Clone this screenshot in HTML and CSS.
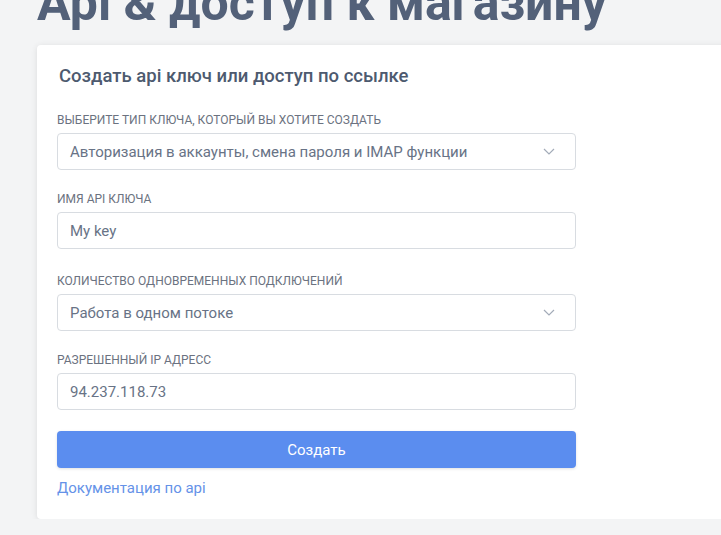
FILE: index.html
```html
<!DOCTYPE html>
<html lang="ru">
<head>
<meta charset="utf-8">
<title>Api & доступ к магазину</title>
<link rel="stylesheet" href="styles.css">
</head>
<body>
<div class="page">
  <h1 class="page-title">Api &amp; доступ к магазину</h1>
  <div class="card">
    <h2 class="card-title">Создать api ключ или доступ по ссылке</h2>
    <form class="form">
      <div class="field">
        <div class="label">Выберите тип ключа, который вы хотите создать</div>
        <div class="control select">
          <span>Авторизация в аккаунты, смена пароля и IMAP функции</span>
          <svg class="chev" width="12" height="7" viewBox="0 0 12 7"><path d="M1 1l5 5 5-5" fill="none" stroke="#a3abb8" stroke-width="1.2"/></svg>
        </div>
      </div>
      <div class="field field--wide">
        <div class="label">Имя api ключа</div>
        <div class="control"><span>My key</span></div>
      </div>
      <div class="field">
        <div class="label">Количество одновременных подключений</div>
        <div class="control select">
          <span>Работа в одном потоке</span>
          <svg class="chev" width="12" height="7" viewBox="0 0 12 7"><path d="M1 1l5 5 5-5" fill="none" stroke="#a3abb8" stroke-width="1.2"/></svg>
        </div>
      </div>
      <div class="field">
        <div class="label">Разрешенный IP адресс</div>
        <div class="control"><span>94.237.118.73</span></div>
      </div>
      <button type="button" class="btn">Создать</button>
      <a class="link" href="#">Документация по api</a>
    </form>
  </div>
</div>
</body>
</html>
```

FILE: styles.css
```css
html, body {
  margin: 0;
  padding: 0;
  background: #f3f4f5;
  font-family: Roboto, "Liberation Sans", sans-serif;
  overflow: hidden;
}
.page {
  padding-left: 37px;
  width: 720px;
}
.page-title {
  margin: -22px 0 0 0;
  font-size: 50px;
  line-height: 50px;
  font-weight: 700;
  color: #536179;
  white-space: nowrap;
  height: 67px;
}
.card {
  background: #fff;
  border-radius: 4px;
  box-shadow: 0 1px 6px rgba(0,0,0,0.10);
  padding: 20px 20px 21px 20px;
  margin-right: -40px;
}
.card-title {
  margin: 0 0 25px 2px;
  font-size: 18.5px;
  line-height: 22px;
  font-weight: 500;
  color: #4d5a6f;
}
.form {
  width: 519px;
  display: flex;
  flex-direction: column;
}
.field {
  display: flex;
  flex-direction: column;
  gap: 5px;
  margin-bottom: 21px;
}
.field--wide {
  margin-bottom: 24px;
}
.label {
  font-size: 12px;
  line-height: 16px;
  text-transform: uppercase;
  color: #6b7280;
}
.control {
  height: 37px;
  box-sizing: border-box;
  border: 1px solid #d8dce1;
  border-radius: 4px;
  display: flex;
  align-items: center;
  justify-content: space-between;
  padding: 0 20px 0 12px;
  font-size: 15px;
  color: #687386;
}
.chev {
  display: block;
}
.btn {
  height: 37px;
  border: 0;
  border-radius: 4px;
  background: #5b8def;
  color: #fff;
  font-family: inherit;
  font-size: 15px;
  box-shadow: 0 1px 3px rgba(0,0,0,0.12);
}
.link {
  margin-top: 10px;
  line-height: 20px;
  font-size: 15px;
  color: #6592e8;
  text-decoration: none;
}
```
